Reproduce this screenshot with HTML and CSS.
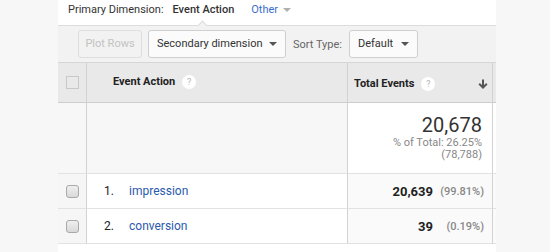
FILE: index.html
```html
<!DOCTYPE html>
<html>
<head>
<meta charset="utf-8">
<link rel="stylesheet" href="styles.css">
</head>
<body>
<div class="page">
  <div class="panel">
    <div class="dimbar">
      <span class="dim-label">Primary Dimension:</span>
      <span class="dim-active">Event Action</span>
      <span class="dim-other">Other<span class="caret caret-light"></span></span>
    </div>
    <div class="notch"></div>
    <div class="toolbar">
      <div class="btn btn-disabled btn-plot">Plot Rows</div>
      <div class="btn btn-select btn-secondary">Secondary dimension<span class="caret"></span></div>
      <span class="sort-label">Sort Type:</span>
      <div class="btn btn-select btn-default">Default<span class="caret"></span></div>
    </div>
    <div class="table">
      <div class="cell head c-check"><span class="box-empty"></span></div>
      <div class="cell head c-dim"><span class="head-text">Event Action</span><span class="help">?</span></div>
      <div class="cell head c-metric"><span class="head-text">Total Events</span><span class="help">?</span>
        <svg class="sort-arrow" width="10" height="10" viewBox="0 0 10 10"><path d="M5 0.5V8.5" stroke="#555" stroke-width="2" fill="none"/><path d="M1.2 4.8L5 8.6L8.8 4.8" stroke="#555" stroke-width="2" fill="none"/></svg>
      </div>
      <div class="cell head c-stub"></div>

      <div class="cell total c-check total-left"></div>
      <div class="cell total c-dim total-left"></div>
      <div class="cell total c-metric total-metric">
        <div class="big">20,678</div>
        <div class="small">% of Total: 26.25%<br>(78,788)</div>
      </div>
      <div class="cell total c-stub total-stub"></div>

      <div class="cell row c-check row-check"><span class="box"></span></div>
      <div class="cell row c-dim"><span class="num">1.</span><span class="link">impression</span></div>
      <div class="cell row c-metric row-metric"><span class="val">20,639</span><span class="pct">(99.81%)</span></div>
      <div class="cell row c-stub row-stub"></div>

      <div class="cell row c-check row-check"><span class="box"></span></div>
      <div class="cell row c-dim"><span class="num">2.</span><span class="link">conversion</span></div>
      <div class="cell row c-metric row-metric"><span class="val">39</span><span class="pct">(0.19%)</span></div>
      <div class="cell row c-stub row-stub"></div>
    </div>
  </div>
</div>
</body>
</html>
```
FILE: styles.css
```css
html, body {
  margin: 0;
  padding: 0;
}
body {
  background: #f7f7f7;
  font-family: Roboto, "Liberation Sans", Arial, sans-serif;
  font-size: 11px;
  color: #333;
}
.page {
  display: flex;
  height: 252px;
  overflow: hidden;
}
.panel {
  position: relative;
  margin-left: 58px;
  width: 438px;
  background: #fff;
}
.dimbar {
  height: 25px;
  border-bottom: 1px solid #dcdcdc;
  padding: 2px 0 0 10px;
  box-sizing: content-box;
  display: flex;
  align-items: flex-start;
  line-height: 16px;
  height: 23px;
}
.dim-label {
  color: #333;
}
.dim-active {
  margin-left: 9px;
  font-weight: 500;
  color: #333;
}
.dim-other {
  margin-left: 17px;
  color: #3a6fcf;
  display: inline-flex;
  align-items: center;
}
.caret {
  display: inline-block;
  width: 0;
  height: 0;
  border-left: 4px solid transparent;
  border-right: 4px solid transparent;
  border-top: 4px solid #555;
}
.caret-light {
  border-top-color: #b0b0b0;
  margin-left: 5px;
}
.notch {
  position: absolute;
  left: 141px;
  top: 22px;
  width: 7px;
  height: 7px;
  box-sizing: border-box;
  background: #f2f2f2;
  border-top: 1px solid #dcdcdc;
  border-left: 1px solid #dcdcdc;
  transform: rotate(45deg);
  z-index: 2;
}
.toolbar {
  height: 36px;
  background: #f2f2f2;
  border-bottom: 1px solid #d6d6d6;
  display: flex;
  align-items: center;
  padding-left: 20px;
}
.btn {
  height: 28px;
  box-sizing: border-box;
  border: 1px solid #cfcfcf;
  border-radius: 3px;
  display: flex;
  align-items: center;
  line-height: 14px;
}
.btn-disabled {
  border-color: #dedede;
  color: #c2c2c2;
  justify-content: center;
  width: 64px;
  background: #f2f2f2;
}
.btn-select {
  background: #fbfbfb;
  color: #333;
  padding-left: 8px;
  justify-content: space-between;
  padding-right: 8px;
}
.btn-secondary {
  width: 138px;
  margin-left: 6px;
}
.sort-label {
  margin-left: 7px;
  color: #666;
}
.btn-default {
  width: 69px;
  margin-left: 7px;
}
.table {
  display: grid;
  grid-template-columns: 29px 261px 145px 3px;
  grid-template-rows: 40px 71px 35px 35px;
}
.cell {
  box-sizing: border-box;
  border-bottom: 1px solid #e2e2e2;
}
.c-check, .c-dim, .c-metric {
  border-right: 1px solid #d2d2d2;
}
.head {
  background: #e9e9e9;
  border-bottom-color: #cdcdcd;
  display: flex;
  align-items: center;
}
.head-text {
  font-weight: 700;
  color: #222;
}
.c-check.head {
  justify-content: center;
}
.box-empty {
  width: 13px;
  height: 13px;
  box-sizing: border-box;
  border: 1px solid #c8c8c8;
  margin-top: -1px;
}
.c-dim.head {
  padding-left: 26px;
  padding-bottom: 2px;
}
.help {
  width: 14px;
  height: 14px;
  border-radius: 50%;
  background: #fff;
  color: #b5b5b5;
  font-size: 9px;
  line-height: 14px;
  text-align: center;
  margin-left: 7px;
}
.c-metric.head {
  padding-left: 6px;
  padding-top: 2px;
}
.sort-arrow {
  margin-left: auto;
  margin-right: 4px;
}
.total-left {
  background: #f7f7f7;
}
.total-metric {
  background: #fff;
  text-align: right;
  padding: 11px 10px 0 0;
}
.big {
  font-size: 20px;
  line-height: 22px;
  color: #333;
}
.small {
  margin-top: 1px;
  line-height: 12px;
  color: #888;
}
.total-stub {
  background: #fff;
}
.row {
  display: flex;
  align-items: center;
  background: #fff;
}
.row-check {
  background: #f6f6f6;
  justify-content: center;
}
.box {
  width: 13px;
  height: 13px;
  box-sizing: border-box;
  border: 1px solid #a9a9a9;
  border-radius: 3px;
  background: linear-gradient(#efefef, #d9d9d9);
}
.c-dim.row {
  padding-left: 17px;
  font-size: 12px;
}
.num {
  display: inline-block;
  width: 25px;
  color: #222;
}
.link {
  color: #2b5aad;
}
.row-metric {
  background: #fafafa;
  justify-content: flex-end;
  padding-right: 8px;
}
.val {
  font-size: 13px;
  font-weight: 700;
  color: #222;
}
.pct {
  width: 51px;
  text-align: right;
  font-weight: 500;
  color: #888;
}
.row-stub {
  background: #fafafa;
}
```
